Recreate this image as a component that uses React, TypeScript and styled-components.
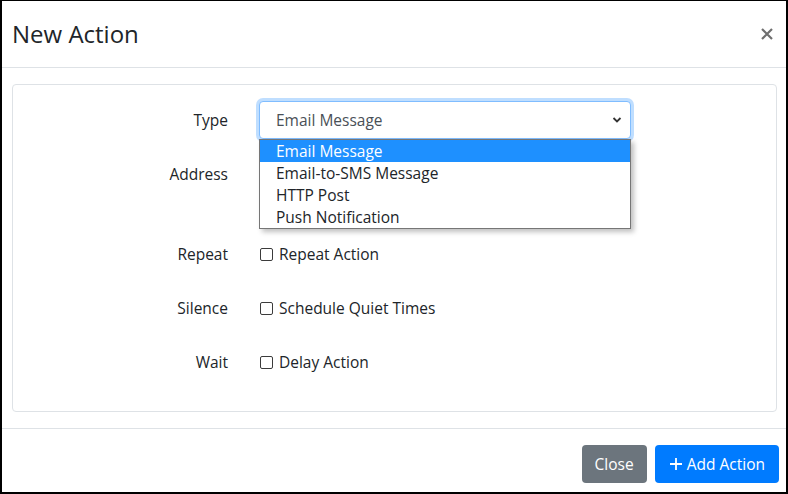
import React from 'react';
import styled, { createGlobalStyle } from 'styled-components';

const GlobalStyle = createGlobalStyle`
  * {
    box-sizing: border-box;
  }
  html,
  body {
    margin: 0;
    padding: 0;
    background: #fff;
  }
  body {
    font-family: 'Open Sans', 'Liberation Sans', sans-serif;
    color: #212529;
  }
`;

const Frame = styled.div`
  width: 788px;
  height: 494px;
  border-style: solid;
  border-color: #000;
  border-width: 1px 2px 2px 2px;
  display: flex;
  flex-direction: column;
  background: #fff;
`;

const Header = styled.div`
  height: 67px;
  flex-shrink: 0;
  display: flex;
  align-items: center;
  justify-content: space-between;
  padding: 0 10px 0 10px;
  border-bottom: 1px solid #dee2e6;
`;

const Title = styled.h5`
  margin: 0;
  font-size: 24px;
  font-weight: 500;
  color: #212529;
  line-height: 1.2;
`;

const CloseX = styled.button`
  border: 0;
  background: none;
  padding: 0;
  margin-right: 2px;
  width: 14px;
  height: 14px;
  display: flex;
  align-items: center;
  justify-content: center;
  cursor: pointer;
`;

const Body = styled.div`
  flex: 1;
  padding: 16px 9px 16px 10px;
  position: relative;
`;

const Card = styled.div`
  border: 1px solid #dee2e6;
  border-radius: 4px;
  height: 328px;
  padding: 16px 0 0 0;
`;

const FormGrid = styled.div`
  display: grid;
  grid-template-columns: 215px 372px;
  column-gap: 31px;
  row-gap: 16px;
  align-items: start;
`;

const Label = styled.div`
  height: 38px;
  display: flex;
  align-items: center;
  justify-content: flex-end;
  font-size: 15.5px;
  color: #212529;
`;

const Field = styled.div<{ $tall?: boolean }>`
  height: ${(p) => (p.$tall ? '64px' : '38px')};
  display: flex;
  align-items: ${(p) => (p.$tall ? 'flex-start' : 'center')};
  position: relative;
`;

const SelectBox = styled.div`
  width: 100%;
  height: 38px;
  border: 1px solid #80bdff;
  border-radius: 4px;
  box-shadow: 0 0 0 3px rgba(0, 123, 255, 0.25);
  display: flex;
  align-items: center;
  justify-content: space-between;
  padding: 0 8px 0 16px;
  font-size: 15.5px;
  color: #495057;
  background: #fff;
`;

const TextInput = styled.div`
  width: 100%;
  height: 38px;
  border: 1px solid #ced4da;
  border-radius: 4px;
`;

const Dropdown = styled.ul`
  position: absolute;
  top: 38px;
  left: 0;
  width: 372px;
  margin: 0;
  padding: 0;
  list-style: none;
  background: #fff;
  border: 1px solid #767676;
  box-shadow: 3px 3px 5px rgba(0, 0, 0, 0.25);
  z-index: 5;
`;

const Option = styled.li<{ $active?: boolean }>`
  height: 22px;
  line-height: 22px;
  padding-left: 16px;
  font-size: 15.5px;
  color: ${(p) => (p.$active ? '#fff' : '#212529')};
  background: ${(p) => (p.$active ? '#1e90ff' : 'transparent')};
`;

const CheckRow = styled.label`
  display: flex;
  align-items: center;
  gap: 6px;
  font-size: 15.5px;
  color: #212529;
  padding-left: 1px;
`;

const Box = styled.span`
  width: 13px;
  height: 13px;
  border: 1px solid #3b3b3b;
  border-radius: 2px;
  background: #fff;
  display: inline-block;
`;

const Footer = styled.div`
  border-top: 1px solid #dee2e6;
  height: 64px;
  flex-shrink: 0;
  display: flex;
  justify-content: flex-end;
  align-items: flex-start;
  gap: 8px;
  padding: 16px 7px 0 0;
`;

const Button = styled.button<{ $variant: 'secondary' | 'primary' }>`
  height: 38px;
  border: 0;
  border-radius: 4px;
  padding: 0 ${(p) => (p.$variant === 'primary' ? '14px' : '13px')};
  font-family: inherit;
  font-size: 15.5px;
  color: #fff;
  display: flex;
  align-items: center;
  gap: 4px;
  background: ${(p) => (p.$variant === 'primary' ? '#007bff' : '#6c757d')};
  cursor: pointer;
`;

const options = ['Email Message', 'Email-to-SMS Message', 'HTTP Post', 'Push Notification'];

const checks = [
  { label: 'Repeat', text: 'Repeat Action' },
  { label: 'Silence', text: 'Schedule Quiet Times' },
  { label: 'Wait', text: 'Delay Action' },
];

export default function App() {
  return (
    <>
      <GlobalStyle />
      <Frame>
        <Header>
          <Title>New Action</Title>
          <CloseX aria-label="Close">
            <svg width="12" height="12" viewBox="0 0 12 12">
              <path d="M1 1 L11 11 M11 1 L1 11" stroke="#6f6f6f" strokeWidth="2.2" />
            </svg>
          </CloseX>
        </Header>
        <Body>
          <Card>
            <FormGrid>
              <Label>Type</Label>
              <Field>
                <SelectBox>
                  <span>Email Message</span>
                  <svg width="10" height="8" viewBox="0 0 10 8">
                    <path d="M1.5 2 L5 5.5 L8.5 2" stroke="#333" strokeWidth="1.8" fill="none" />
                  </svg>
                </SelectBox>
                <Dropdown>
                  {options.map((o, i) => (
                    <Option key={o} $active={i === 0}>
                      {o}
                    </Option>
                  ))}
                </Dropdown>
              </Field>
              <Label>Address</Label>
              <Field $tall>
                <TextInput />
              </Field>
              {checks.map((c) => (
                <React.Fragment key={c.label}>
                  <Label>{c.label}</Label>
                  <Field>
                    <CheckRow>
                      <Box />
                      {c.text}
                    </CheckRow>
                  </Field>
                </React.Fragment>
              ))}
            </FormGrid>
          </Card>
        </Body>
        <Footer>
          <Button $variant="secondary">Close</Button>
          <Button $variant="primary">
            <svg width="14" height="14" viewBox="0 0 14 14">
              <path d="M7 1 V13 M1 7 H13" stroke="#fff" strokeWidth="1.8" />
            </svg>
            Add Action
          </Button>
        </Footer>
      </Frame>
    </>
  );
}
